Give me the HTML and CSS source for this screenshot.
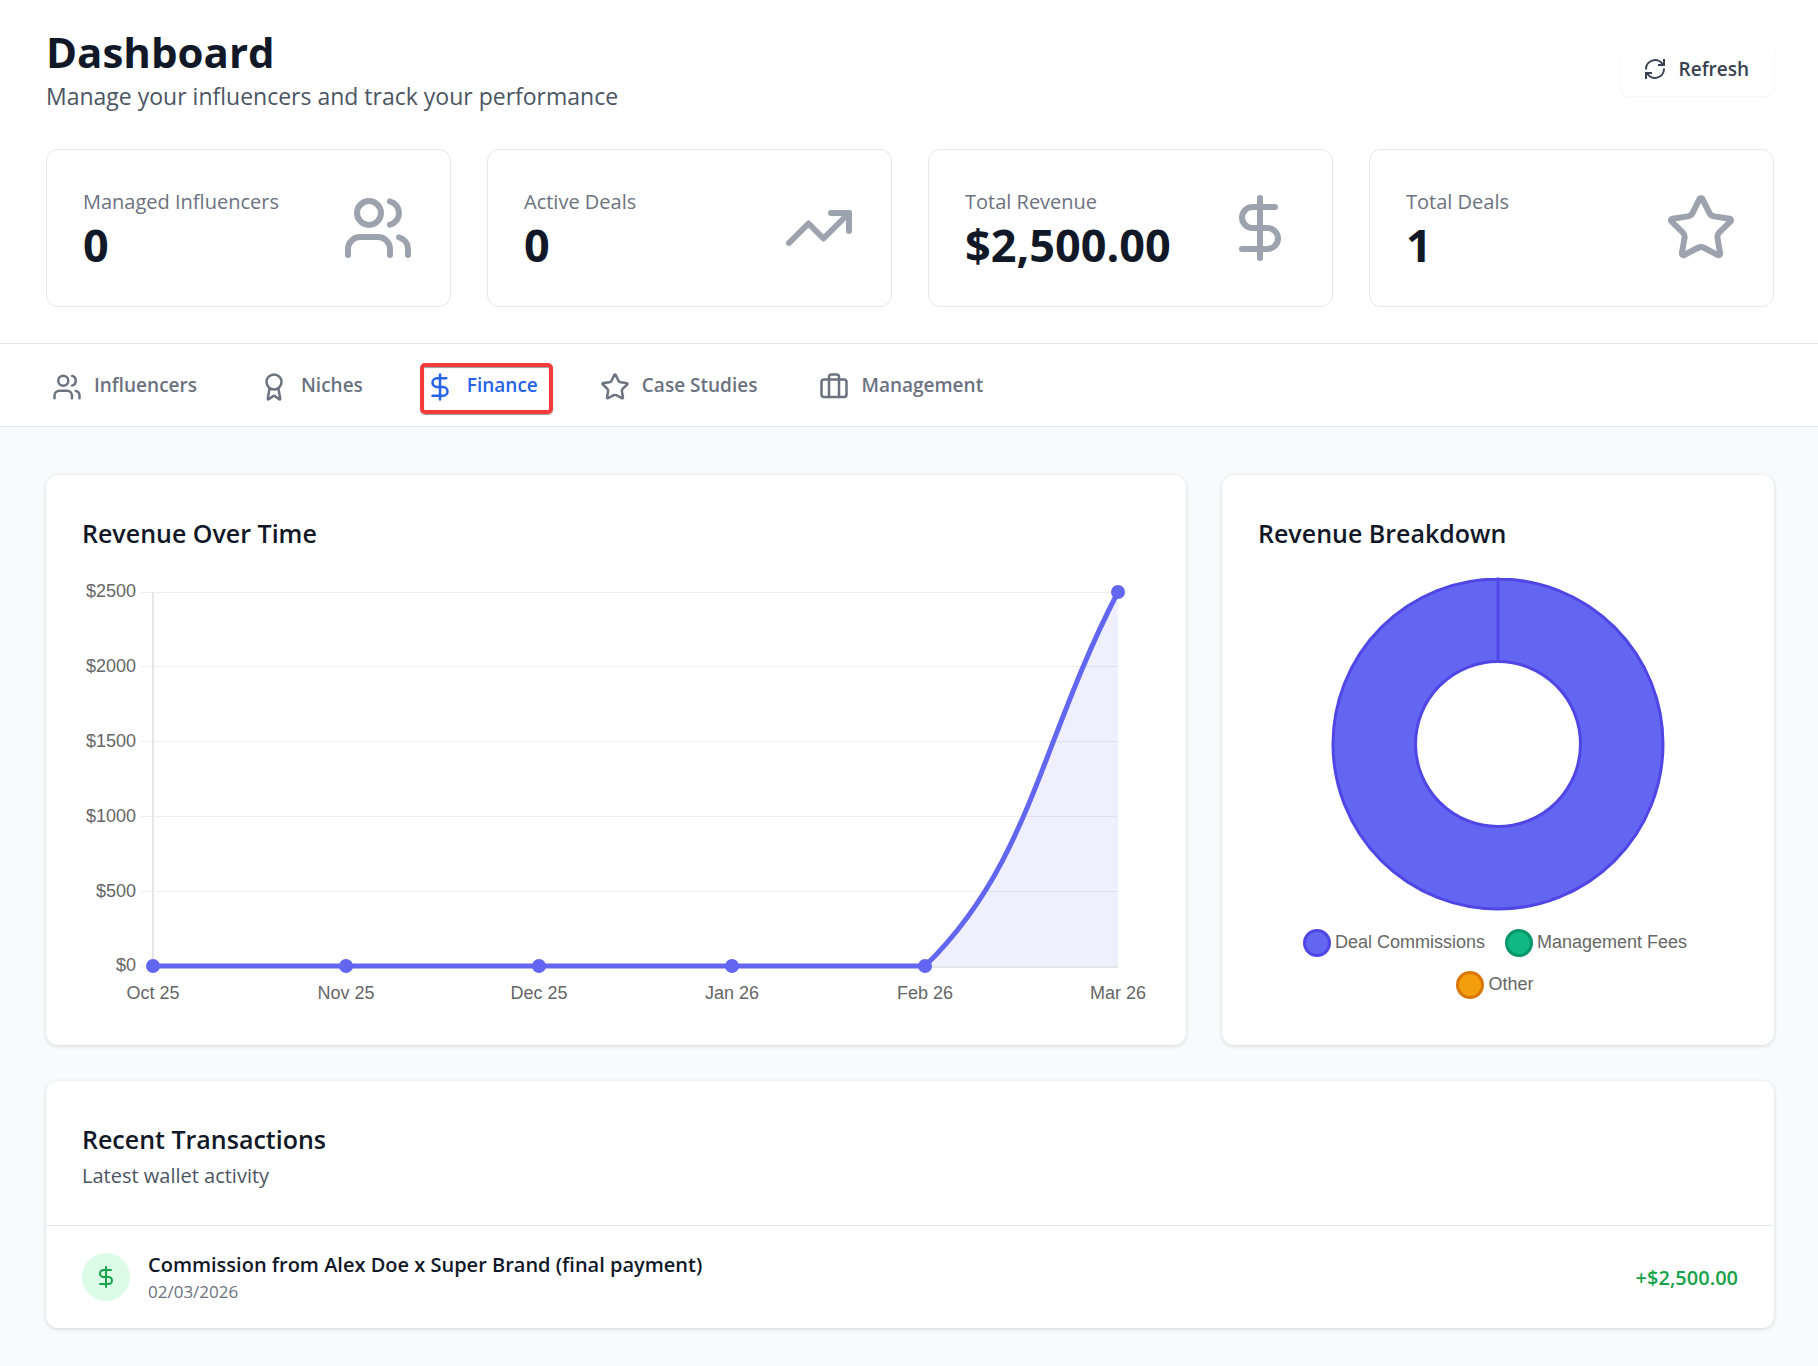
FILE: index.html
```html
<!DOCTYPE html>
<html lang="en">
<head>
    <meta charset="UTF-8">
    <meta name="viewport" content="width=device-width, initial-scale=1.0">
    <title>Dashboard</title>
    <link rel="stylesheet" href="styles.css">
</head>
<body>
    <!-- shared icons -->
    <svg class="sprite" aria-hidden="true">
        <symbol id="icon-users" viewBox="0 0 24 24">
            <path d="M16 21v-2a4 4 0 0 0-4-4H6a4 4 0 0 0-4 4v2"/>
            <circle cx="9" cy="7" r="4"/>
            <path d="M22 21v-2a4 4 0 0 0-3-3.87"/>
            <path d="M16 3.13a4 4 0 0 1 0 7.75"/>
        </symbol>
        <symbol id="icon-trend" viewBox="0 0 24 24">
            <polyline points="22 7 13.5 15.5 8.5 10.5 2 17"/>
            <polyline points="16 7 22 7 22 13"/>
        </symbol>
        <symbol id="icon-dollar" viewBox="0 0 24 24">
            <line x1="12" x2="12" y1="2" y2="22"/>
            <path d="M17 5H9.5a3.5 3.5 0 0 0 0 7h5a3.5 3.5 0 0 1 0 7H6"/>
        </symbol>
        <symbol id="icon-star" viewBox="0 0 24 24">
            <path d="M11.525 2.295a.53.53 0 0 1 .95 0l2.31 4.679a2.123 2.123 0 0 0 1.595 1.16l5.166.756a.53.53 0 0 1 .294.904l-3.736 3.638a2.123 2.123 0 0 0-.611 1.878l.882 5.14a.53.53 0 0 1-.771.56l-4.618-2.428a2.122 2.122 0 0 0-1.973 0L6.396 21.01a.53.53 0 0 1-.77-.56l.881-5.139a2.122 2.122 0 0 0-.611-1.879L2.16 9.795a.53.53 0 0 1 .294-.906l5.165-.755a2.122 2.122 0 0 0 1.597-1.16z"/>
        </symbol>
        <symbol id="icon-award" viewBox="0 0 24 24">
            <path d="m15.477 12.89 1.515 8.526a.5.5 0 0 1-.81.47l-3.58-2.687a1 1 0 0 0-1.197 0l-3.586 2.686a.5.5 0 0 1-.81-.469l1.514-8.526"/>
            <circle cx="12" cy="8" r="6"/>
        </symbol>
        <symbol id="icon-case" viewBox="0 0 24 24">
            <path d="M16 20V4a2 2 0 0 0-2-2h-4a2 2 0 0 0-2 2v16"/>
            <rect width="20" height="14" x="2" y="6" rx="2"/>
        </symbol>
        <symbol id="icon-refresh" viewBox="0 0 20 20">
            <path d="M1 10.500V10A9 9 0 0 1 18 6M19 0v6h-6"/>
            <path d="M19 9.500V10A9 9 0 0 1 2 14M1 20v-6h6"/>
        </symbol>
    </svg>

    <header class="header">
        <div class="header-top">
            <div>
                <h1 class="title">Dashboard</h1>
                <p class="subtitle">Manage your influencers and track your performance</p>
            </div>
            <button type="button" class="refresh-btn">
                <svg class="icon refresh-icon"><use href="#icon-refresh"/></svg>
                Refresh
            </button>
        </div>

        <div class="stats">
            <div class="stat">
                <div>
                    <p class="stat-label">Managed Influencers</p>
                    <p class="stat-value">0</p>
                </div>
                <svg class="icon stat-icon"><use href="#icon-users"/></svg>
            </div>
            <div class="stat">
                <div>
                    <p class="stat-label">Active Deals</p>
                    <p class="stat-value">0</p>
                </div>
                <svg class="icon stat-icon"><use href="#icon-trend"/></svg>
            </div>
            <div class="stat">
                <div>
                    <p class="stat-label">Total Revenue</p>
                    <p class="stat-value">$2,500.00</p>
                </div>
                <svg class="icon stat-icon"><use href="#icon-dollar"/></svg>
            </div>
            <div class="stat">
                <div>
                    <p class="stat-label">Total Deals</p>
                    <p class="stat-value">1</p>
                </div>
                <svg class="icon stat-icon"><use href="#icon-star"/></svg>
            </div>
        </div>
    </header>

    <nav class="tabs">
        <a href="#influencers" class="tab"><svg class="icon tab-icon"><use href="#icon-users"/></svg>Influencers</a>
        <a href="#niches" class="tab"><svg class="icon tab-icon"><use href="#icon-award"/></svg>Niches</a>
        <a href="#finance" class="tab active"><svg class="icon tab-icon"><use href="#icon-dollar"/></svg>Finance</a>
        <a href="#case-studies" class="tab"><svg class="icon tab-icon"><use href="#icon-star"/></svg>Case Studies</a>
        <a href="#management" class="tab"><svg class="icon tab-icon"><use href="#icon-case"/></svg>Management</a>
    </nav>

    <main class="content">
        <div class="charts">
            <section class="card card-wide">
                <h2 class="card-title">Revenue Over Time</h2>
                <svg class="line-chart" viewBox="0 0 1068 440" role="img" aria-label="Revenue over time">
                    <!-- grid -->
                    <g class="grid">
                        <path d="M59 23.5H1036M59 97.5H1036M59 172.5H1036M59 247.5H1036M59 322.5H1036M59 397.5H1036"/>
                        <path class="axis" d="M71 23V398H1036"/>
                    </g>
                    <g class="y-labels">
                        <text x="54" y="28">$2500</text>
                        <text x="54" y="103">$2000</text>
                        <text x="54" y="178">$1500</text>
                        <text x="54" y="253">$1000</text>
                        <text x="54" y="328">$500</text>
                        <text x="54" y="402">$0</text>
                    </g>
                    <g class="x-labels">
                        <text x="71" y="430">Oct 25</text>
                        <text x="264" y="430">Nov 25</text>
                        <text x="457" y="430">Dec 25</text>
                        <text x="650" y="430">Jan 26</text>
                        <text x="843" y="430">Feb 26</text>
                        <text x="1036" y="430">Mar 26</text>
                    </g>
                    <!-- revenue -->
                    <path class="area" d="M843 397C948 295 958 173 1036 23V397Z"/>
                    <path class="line" d="M71 397H843C948 295 958 173 1036 23"/>
                    <g class="points">
                        <circle cx="71" cy="397" r="7"/>
                        <circle cx="264" cy="397" r="7"/>
                        <circle cx="457" cy="397" r="7"/>
                        <circle cx="650" cy="397" r="7"/>
                        <circle cx="843" cy="397" r="7"/>
                        <circle cx="1036" cy="23" r="7"/>
                    </g>
                </svg>
            </section>

            <section class="card">
                <h2 class="card-title">Revenue Breakdown</h2>
                <svg class="donut" viewBox="0 0 334 334" role="img" aria-label="Revenue breakdown">
                    <path d="M167 2a165 165 0 1 1 0 330a165 165 0 1 1 0-330V84.500a82.500 82.500 0 1 0 0 165a82.500 82.500 0 1 0 0-165Z"/>
                </svg>
                <ul class="legend">
                    <li><span class="dot dot-deals"></span>Deal Commissions</li>
                    <li><span class="dot dot-fees"></span>Management Fees</li>
                    <li><span class="dot dot-other"></span>Other</li>
                </ul>
            </section>
        </div>

        <section class="transactions">
            <div class="transactions-head">
                <h2 class="card-title">Recent Transactions</h2>
                <p class="card-subtitle">Latest wallet activity</p>
            </div>
            <ul class="transaction-list">
                <li class="transaction">
                    <span class="transaction-icon"><svg class="icon"><use href="#icon-dollar"/></svg></span>
                    <div class="transaction-info">
                        <p class="transaction-name">Commission from Alex Doe x Super Brand (final payment)</p>
                        <p class="transaction-date">02/03/2026</p>
                    </div>
                    <span class="amount">+$2,500.00</span>
                </li>
            </ul>
        </section>
    </main>
</body>
</html>
```
FILE: styles.css
```css
* {
    box-sizing: border-box;
}
body {
    margin: 0;
    font-family: "Segoe UI", "Open Sans", "Noto Sans", sans-serif;
    font-size: 20px;
    color: #111827;
    background: #f9fafb;
}
h1, h2, p, ul {
    margin: 0;
    padding: 0;
}
ul {
    list-style: none;
}
.sprite {
    position: absolute;
    width: 0;
    height: 0;
}
.icon {
    width: 24px;
    height: 24px;
    flex-shrink: 0;
    fill: none;
    stroke: currentColor;
    stroke-width: 2;
    stroke-linecap: round;
    stroke-linejoin: round;
}

/* header */
.header {
    background: #fff;
    padding: 25px 44px 36px 46px;
    border-bottom: 1px solid #e5e7eb;
}
.header-top {
    display: flex;
    justify-content: space-between;
    align-items: center;
    margin-bottom: 36px;
}
.title {
    font-size: 42px;
    line-height: 54px;
    font-weight: 700;
}
.subtitle {
    font-size: 23px;
    line-height: 34px;
    color: #4b5563;
}
.refresh-btn {
    display: flex;
    align-items: center;
    gap: 14px;
    height: 54px;
    padding: 0 25px;
    border: none;
    border-radius: 9px;
    background: #fff;
    color: #374151;
    font-family: inherit;
    font-size: 19px;
    font-weight: 600;
    box-shadow: 0 1px 3px rgba(0, 0, 0, 0.05);
    cursor: pointer;
}
.refresh-icon {
    width: 20px;
    height: 20px;
    stroke-linecap: butt;
    stroke-linejoin: miter;
}
.stats {
    display: grid;
    grid-template-columns: repeat(4, 1fr);
    gap: 36px;
}
.stat {
    display: flex;
    justify-content: space-between;
    align-items: center;
    padding: 35px 36px;
    border: 1px solid #e5e7eb;
    border-radius: 12px;
}
.stat-label {
    font-size: 20px;
    line-height: 34px;
    color: #6b7280;
}
.stat-value {
    font-size: 45px;
    line-height: 52px;
    font-weight: 700;
}
.stat-icon {
    width: 72px;
    height: 72px;
    color: #9ca3af;
}

/* tabs */
.tabs {
    display: flex;
    gap: 62px;
    padding: 24px 52px;
    background: #fff;
    border-bottom: 1px solid #e5e7eb;
}
.tab {
    position: relative;
    display: flex;
    align-items: flex-end;
    gap: 12px;
    font-size: 19px;
    line-height: 34px;
    font-weight: 600;
    color: #6b7280;
    text-decoration: none;
}
.tab-icon {
    width: 30px;
    height: 30px;
}
.tab.active {
    color: #2563eb;
}
.tab.active::after {
    content: "";
    position: absolute;
    inset: -5px -15px -12px -5px;
    border: 4px solid #f43b3b;
    border-radius: 5px;
    box-shadow: 0 1px 1px rgba(0, 0, 0, 0.4), inset 0 1px 1px rgba(0, 0, 0, 0.4);
}

/* cards */
.content {
    padding: 48px 44px 36px 46px;
}
.charts {
    display: grid;
    grid-template-columns: repeat(3, 1fr);
    gap: 36px;
    margin-bottom: 36px;
}
.card, .transactions {
    background: #fff;
    border-radius: 12px;
    box-shadow: 0 1px 4px rgba(0, 0, 0, 0.15);
}
.card {
    padding: 36px;
}
.card-wide {
    grid-column: span 2;
}
.card-title {
    font-size: 25px;
    line-height: 44px;
    font-weight: 600;
}
.line-chart {
    display: block;
    width: 100%;
    margin-top: 14px;
    font-family: Arial, "Liberation Sans", sans-serif;
    font-size: 18px;
    fill: #666;
}
.grid path {
    fill: none;
    stroke: #ededed;
    stroke-width: 1;
}
.grid .axis {
    stroke: #e5e5e7;
    stroke-width: 2;
}
.y-labels {
    text-anchor: end;
}
.x-labels {
    text-anchor: middle;
}
.area {
    fill: rgba(99, 102, 241, 0.1);
}
.line {
    fill: none;
    stroke: #6366f1;
    stroke-width: 5;
}
.points {
    fill: #6366f1;
}
.donut {
    display: block;
    width: 334px;
    max-width: 100%;
    margin: 22px auto 18px;
    fill: #6366f1;
    stroke: #4f46e5;
    stroke-width: 3;
}
.legend {
    display: flex;
    flex-wrap: wrap;
    justify-content: center;
    gap: 14px 20px;
    padding: 0 36px 0 30px;
    font-family: Arial, "Liberation Sans", sans-serif;
    font-size: 18px;
    line-height: 26px;
    color: #666;
}
.legend li {
    display: flex;
    gap: 4px;
}
.dot {
    width: 28px;
    height: 28px;
    border: 3px solid;
    border-radius: 50%;
}
.dot-deals {
    background: #6366f1;
    border-color: #4f46e5;
}
.dot-fees {
    background: #10b981;
    border-color: #059669;
}
.dot-other {
    background: #f59e0b;
    border-color: #d97706;
}

/* transactions */
.transactions-head {
    padding: 36px 36px 34px;
    border-bottom: 1px solid #e5e7eb;
}
.card-subtitle {
    line-height: 30px;
    color: #4b5563;
}
.transaction {
    display: flex;
    align-items: center;
    gap: 18px;
    padding: 24px 36px;
}
.transaction-icon {
    display: flex;
    align-items: center;
    justify-content: center;
    width: 48px;
    height: 48px;
    border-radius: 50%;
    background: #dcfce7;
    color: #16a34a;
}
.transaction-info {
    flex: 1;
}
.transaction-name {
    line-height: 30px;
    font-weight: 600;
}
.transaction-date {
    font-size: 17px;
    line-height: 24px;
    color: #6b7280;
}
.amount {
    font-weight: 600;
    color: #16a34a;
}
```
